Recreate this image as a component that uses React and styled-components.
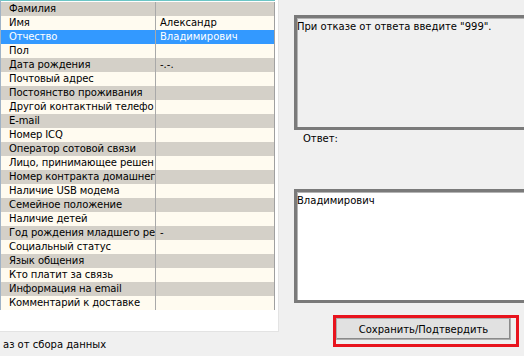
import React from 'react';
import styled, { createGlobalStyle } from 'styled-components';

const GlobalStyle = createGlobalStyle`
  html, body {
    margin: 0;
    padding: 0;
    background: #f0f0f0;
  }
  body {
    font-family: "DejaVu Sans", Tahoma, sans-serif;
    font-size: 10px;
    color: #000;
  }
`;

// rows of the questionnaire grid (names are cut by the column, as on screen)
const fields = [
  { name: 'Фамилия', value: '' },
  { name: 'Имя', value: 'Александр' },
  { name: 'Отчество', value: 'Владимирович', selected: true },
  { name: 'Пол', value: '' },
  { name: 'Дата рождения', value: '-.-.' },
  { name: 'Почтовый адрес', value: '' },
  { name: 'Постоянство проживания', value: '' },
  { name: 'Другой контактный телефо', value: '' },
  { name: 'E-mail', value: '' },
  { name: 'Номер ICQ', value: '' },
  { name: 'Оператор сотовой связи', value: '' },
  { name: 'Лицо, принимающее решен', value: '' },
  { name: 'Номер контракта домашнег', value: '' },
  { name: 'Наличие USB модема', value: '' },
  { name: 'Семейное положение', value: '' },
  { name: 'Наличие детей', value: '' },
  { name: 'Год рождения младшего ре', value: '-' },
  { name: 'Социальный статус', value: '' },
  { name: 'Язык общения', value: '' },
  { name: 'Кто платит за связь', value: '' },
  { name: 'Информация на email', value: '' },
  { name: 'Комментарий к доставке', value: '' },
];

const App = () => {
  return (
    <>
      <GlobalStyle />
      <Window>
        <LeftColumn>
          <GridBox>
            <Rows>
              {fields.map((f, i) => (
                <Row key={f.name} $odd={i % 2 === 1} $selected={f.selected}>
                  <NameCell>{f.name}</NameCell>
                  <ValueCell>{f.value}</ValueCell>
                </Row>
              ))}
            </Rows>
          </GridBox>
          <Status>аз от сбора данных</Status>
        </LeftColumn>
        <RightColumn>
          <Memo $readonly>При отказе от ответа введите "999".</Memo>
          <Label>Ответ:</Label>
          <Memo>Владимирович</Memo>
          <ButtonFrame>
            <Button>Сохранить/Подтвердить</Button>
          </ButtonFrame>
        </RightColumn>
      </Window>
    </>
  );
};

const Window = styled.div`
  width: 524px;
  height: 356px;
  display: flex;
  overflow: hidden;
  background: #f0f0f0;
`;

const LeftColumn = styled.div`
  width: 279px;
  flex-shrink: 0;
  display: flex;
  flex-direction: column;
`;

const GridBox = styled.div`
  height: 332px;
  background: #fff;
  border-right: 1px solid #e3e3e3;
  border-bottom: 1px solid #e3e3e3;
  box-sizing: border-box;
  padding-right: 3px;
`;

const Rows = styled.div`
  border-top: 1px solid #6cc6c6;
  padding-top: 1px;
  border-left: 1px solid #9fb2c6;
`;

const Row = styled.div`
  display: flex;
  height: 14px;
  line-height: 14px;
  background: ${(p) => (p.$selected ? '#3399ff' : p.$odd ? '#fffbf0' : '#d4d0c8')};
  color: ${(p) => (p.$selected ? '#fff' : '#000')};
  border-right: 1px solid #a0a0a0;
`;

const NameCell = styled.div`
  width: 146px;
  padding-left: 8px;
  letter-spacing: -0.1px;
  white-space: nowrap;
  overflow: hidden;
  border-right: 1px solid #a9a9a9;
`;

const ValueCell = styled.div`
  flex: 1;
  padding-left: 4px;
  white-space: nowrap;
  overflow: hidden;
`;

const Status = styled.div`
  padding: 6px 0 0 3px;
  line-height: 13px;
  white-space: nowrap;
`;

const RightColumn = styled.div`
  flex: 1;
  padding: 15px 0 0 15px;
  display: flex;
  flex-direction: column;
  align-items: flex-start;
`;

const Memo = styled.div`
  width: 250px;
  height: ${(p) => (p.$readonly ? '115px' : '114px')};
  box-sizing: border-box;
  flex-shrink: 0;
  background: ${(p) => (p.$readonly ? '#f0f0f0' : '#fff')};
  border: 3px solid #7a7a7a;
  border-right: none;
  box-shadow: inset 1px 1px 0 #b4b4b4;
  padding: 2px 0 0 0;
  line-height: 13px;
  white-space: nowrap;
`;

const Label = styled.div`
  margin: 2px 0 0 9px;
  line-height: 13px;
  height: 57px;
`;

const ButtonFrame = styled.div`
  margin: 12px 0 0 39px;
  border: 3px solid #e8141e;
  width: 186px;
  height: 32px;
  box-sizing: border-box;
  display: flex;
  align-items: flex-start;
`;

const Button = styled.button`
  width: 175px;
  height: 22px;
  background: #e1e1e1;
  border: 1px solid #adadad;
  box-shadow: inset -1px -1px 0 #8a8a8a;
  font-family: "DejaVu Sans", Tahoma, sans-serif;
  font-size: 10px;
  color: #000;
  padding: 0;
`;

export default App;
